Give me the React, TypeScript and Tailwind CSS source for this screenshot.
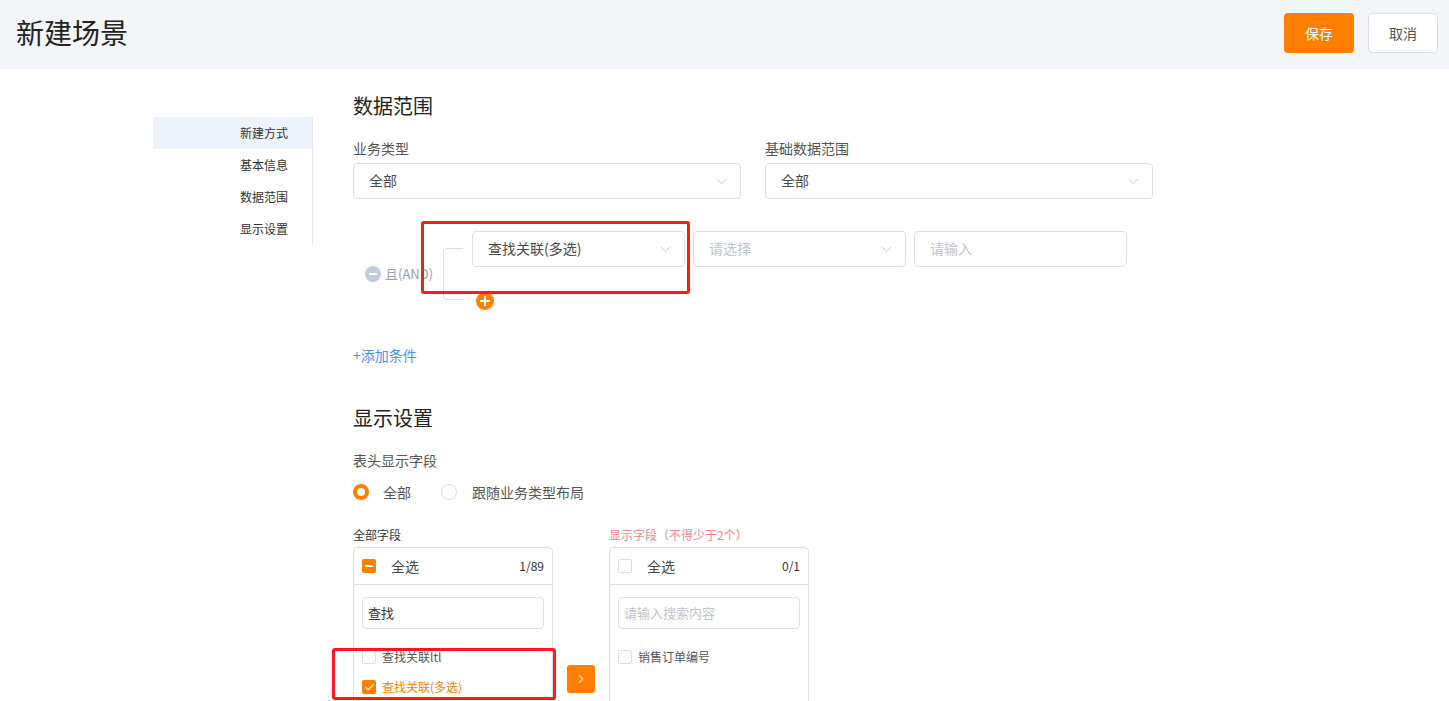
import { ChevronDown, ChevronRight, Check } from "lucide-react";

const font = { fontFamily: '"Noto Sans CJK SC", "Noto Sans", sans-serif' };

function Select({ value, placeholder, className }: { value?: string; placeholder?: string; className: string }) {
  return (
    <div
      className={`h-[36px] flex items-center justify-between pl-[15px] pr-[10px] border border-[#dcdfe6] rounded-[4px] bg-white text-[14px] ${className}`}
    >
      <span className={`leading-[20px] -mt-[2px] ${value ? "text-[#4a4a4a]" : "text-[#c0c4cc]"}`}>{value ?? placeholder}</span>
      <ChevronDown className="w-[17px] h-[17px] text-[#c0c4cc]" strokeWidth={1.3} />
    </div>
  );
}

function Box({ state }: { state: "on" | "off" | "half" }) {
  if (state === "off")
    return <span className="w-[14px] h-[14px] rounded-[2px] border border-[#dcdfe6] bg-white shrink-0" />;
  return (
    <span className="w-[14px] h-[14px] rounded-[2px] bg-[#ff8000] flex items-center justify-center shrink-0">
      {state === "half" ? (
        <span className="w-[8px] h-[2px] bg-white" />
      ) : (
        <Check className="w-[11px] h-[11px] text-white" strokeWidth={2.5} />
      )}
    </span>
  );
}

function Panel({
  count,
  allState,
  search,
  searchPlaceholder,
  children,
}: {
  count: string;
  allState: "on" | "off" | "half";
  search?: string;
  searchPlaceholder?: string;
  children: React.ReactNode;
}) {
  return (
    <div className="relative w-[200px] h-[200px] border border-[#dcdfe6] rounded-t-[4px] bg-white">
      <div className="h-[37px] flex items-center justify-between px-[8px] border-b border-[#dcdfe6]">
        <div className="flex items-center gap-[15px]">
          <Box state={allState} />
          <span className="text-[14px] text-[#4a4a4a]">全选</span>
        </div>
        <span className="text-[12px] text-[#333]">{count}</span>
      </div>
      <div className="px-[8px] pt-[12px]">
        <div className="h-[32px] border border-[#dcdfe6] rounded-[4px] flex items-center px-[5px] text-[13px]">
          {search ? (
            <span className="text-[#333]">{search}</span>
          ) : (
            <span className="text-[#c0c4cc]">{searchPlaceholder}</span>
          )}
        </div>
      </div>
      <div className="px-[8px] pt-[19px] flex flex-col gap-[12px]">{children}</div>
    </div>
  );
}

export default function App() {
  return (
    <div className="h-[701px] overflow-hidden bg-white" style={font}>
      <header className="h-[69px] bg-[#f4f5f9] flex items-start justify-between pl-[16px] pr-[11px]">
        <h1 className="mt-[14px] text-[28px] leading-[36px] text-[#222]">新建场景</h1>
        <div className="mt-[13px] flex items-center gap-[14px]">
          <button className="w-[70px] h-[40px] rounded-[4px] bg-[#ff8000] text-white text-[14px]">保存</button>
          <button className="w-[70px] h-[40px] rounded-[4px] bg-white border border-[#dcdfe6] text-[#555] text-[14px]">
            取消
          </button>
        </div>
      </header>

      <div className="flex">
        <nav className="ml-[153px] mt-[48px] w-[160px] self-start border-r border-[#e4e7ed] text-[12px] text-[#333]">
          {["新建方式", "基本信息", "数据范围", "显示设置"].map((t, i) => (
            <div
              key={t}
              className={`h-[32px] flex items-center justify-end pr-[24px] ${i === 0 ? "bg-[#eef2fb]" : ""}`}
            >
              {t}
            </div>
          ))}
        </nav>

        <main className="ml-[40px] pt-[23px]">
          <h2 className="text-[20px] leading-[28px] text-[#222]">数据范围</h2>

          <div className="flex gap-[24px] mt-[19px]">
            <div>
              <div className="text-[14px] leading-[20px] text-[#555] mb-[5px] -mt-[1px]">业务类型</div>
              <Select value="全部" className="w-[388px]" />
            </div>
            <div>
              <div className="text-[14px] leading-[20px] text-[#555] mb-[5px] -mt-[1px]">基础数据范围</div>
              <Select value="全部" className="w-[388px]" />
            </div>
          </div>

          <div className="relative flex mt-[32px]">
            <div className="w-[90px] h-[86px] flex items-center pl-[12px] gap-[4px]">
              <span className="w-[16px] h-[16px] rounded-full bg-[#c4ccd8] flex items-center justify-center">
                <span className="w-[8px] h-[2px] bg-white" />
              </span>
              <span className="text-[13px] text-[#9aa0ac]">且(AND)</span>
            </div>
            <div className="w-[29px] pt-[17px]">
              <div className="w-[20px] h-[52px] border-l border-t border-b border-[#dcdfe6] rounded-l-[4px]" />
            </div>
            <div>
              <div className="flex gap-[8px]">
                <Select value="查找关联(多选)" className="w-[213px]" />
                <Select placeholder="请选择" className="w-[213px]" />
                <div className="w-[213px] h-[36px] border border-[#dcdfe6] rounded-[4px] flex items-center pl-[15px] text-[14px] text-[#c0c4cc]">
                  <span className="leading-[20px] -mt-[2px]">请输入</span>
                </div>
              </div>
              <div className="ml-[4px] mt-[25px] w-[18px] h-[18px] rounded-full bg-[#ff8000] flex items-center justify-center">
                <span className="relative w-[10px] h-[10px]">
                  <span className="absolute left-0 top-[4px] w-[10px] h-[2px] bg-white" />
                  <span className="absolute left-[4px] top-0 w-[2px] h-[10px] bg-white" />
                </span>
              </div>
            </div>
            <div className="absolute left-[68px] top-[-10px] w-[269px] h-[73px] border-[3px] border-[#ff1a1a] rounded-[3px]" />
          </div>

          <div className="mt-[28px] text-[14px] leading-[20px] text-[#4e8ee6]">+添加条件</div>

          <h2 className="mt-[39px] text-[20px] leading-[28px] text-[#222]">显示设置</h2>
          <div className="mt-[18px] text-[14px] leading-[20px] text-[#555]">表头显示字段</div>

          <div className="mt-[12px] flex items-center text-[14px] leading-[20px] text-[#555]">
            <span className="w-[16px] h-[16px] rounded-full border-[4px] border-[#ff8000] bg-white" />
            <span className="ml-[14px]">全部</span>
            <span className="ml-[30px] w-[16px] h-[16px] rounded-full border border-[#dcdfe6] bg-white" />
            <span className="ml-[15px]">跟随业务类型布局</span>
          </div>

          <div className="mt-[24px] flex">
            <div>
              <div className="text-[12px] leading-[17px] text-[#333] mb-[4px]">全部字段</div>
              <Panel count="1/89" allState="half" search="查找">
                <div className="flex items-center gap-[6px] text-[12px] leading-[18px] text-[#555]">
                  <Box state="off" />
                  <span>查找关联ltl</span>
                </div>
                <div className="flex items-center gap-[6px] text-[12px] leading-[18px] text-[#ff8000]">
                  <Box state="on" />
                  <span>查找关联(多选)</span>
                </div>
                <div className="absolute left-[-22px] top-[100px] w-[224px] h-[52px] border-[3px] border-[#ff1a1a] rounded-[3px]" />
              </Panel>
            </div>

            <div className="mx-[14px] pt-[139px]">
              <div className="w-[28px] h-[28px] rounded-[3px] bg-[#ff8000] flex items-center justify-center">
                <ChevronRight className="w-[14px] h-[14px] text-white" strokeWidth={1.8} />
              </div>
            </div>

            <div>
              <div className="text-[12px] leading-[17px] text-[#f78585] mb-[4px]">显示字段（不得少于2个）</div>
              <Panel count="0/1" allState="off" searchPlaceholder="请输入搜索内容">
                <div className="flex items-center gap-[6px] text-[12px] leading-[18px] text-[#555]">
                  <Box state="off" />
                  <span>销售订单编号</span>
                </div>
              </Panel>
            </div>
          </div>
        </main>
      </div>
    </div>
  );
}
